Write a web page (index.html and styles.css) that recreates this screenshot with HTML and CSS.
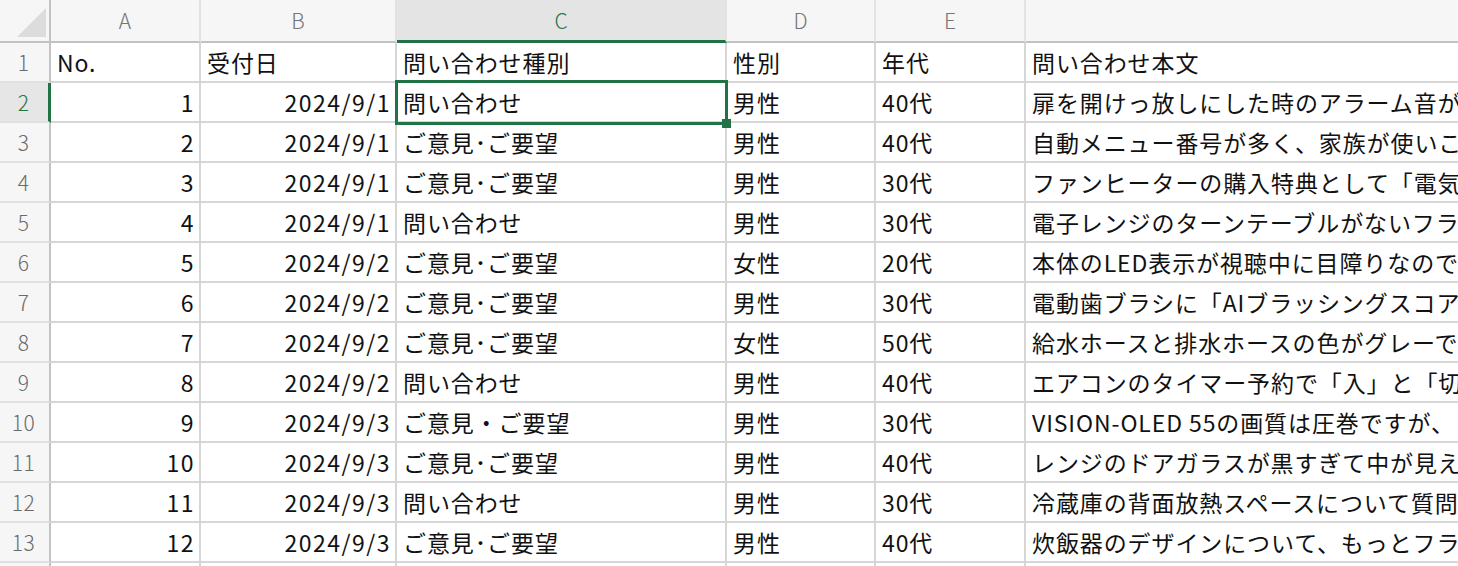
FILE: index.html
```html
<!DOCTYPE html>
<html lang="ja">
<head>
<meta charset="utf-8">
<title>Sheet</title>
<link rel="stylesheet" href="styles.css">
</head>
<body>
<div class="sheet">
  <div class="corner">
    <svg width="50" height="43" viewBox="0 0 50 43"><polygon points="17,37 46,37 46,8" fill="#dcdcdc"/></svg>
  </div>
  <div class="colhead">A</div>
  <div class="colhead">B</div>
  <div class="colhead sel">C</div>
  <div class="colhead">D</div>
  <div class="colhead">E</div>
  <div class="colhead last"></div>

  <div class="rowhead">1</div>
  <div class="cell">No.</div>
  <div class="cell">受付日</div>
  <div class="cell">問い合わせ種別</div>
  <div class="cell">性別</div>
  <div class="cell">年代</div>
  <div class="cell">問い合わせ本文</div>

  <div class="rowhead sel">2</div>
  <div class="cell num">1</div>
  <div class="cell num">2024/9/1</div>
  <div class="cell active">問い合わせ<span class="selbox"><span class="handle"></span></span></div>
  <div class="cell">男性</div>
  <div class="cell">40代</div>
  <div class="cell">扉を開けっ放しにした時のアラーム音が</div>

  <div class="rowhead">3</div>
  <div class="cell num">2</div>
  <div class="cell num">2024/9/1</div>
  <div class="cell">ご意見･ご要望</div>
  <div class="cell">男性</div>
  <div class="cell">40代</div>
  <div class="cell">自動メニュー番号が多く、家族が使いこ</div>

  <div class="rowhead">4</div>
  <div class="cell num">3</div>
  <div class="cell num">2024/9/1</div>
  <div class="cell">ご意見･ご要望</div>
  <div class="cell">男性</div>
  <div class="cell">30代</div>
  <div class="cell">ファンヒーターの購入特典として「電気</div>

  <div class="rowhead">5</div>
  <div class="cell num">4</div>
  <div class="cell num">2024/9/1</div>
  <div class="cell">問い合わせ</div>
  <div class="cell">男性</div>
  <div class="cell">30代</div>
  <div class="cell">電子レンジのターンテーブルがないフラ</div>

  <div class="rowhead">6</div>
  <div class="cell num">5</div>
  <div class="cell num">2024/9/2</div>
  <div class="cell">ご意見･ご要望</div>
  <div class="cell">女性</div>
  <div class="cell">20代</div>
  <div class="cell">本体のLED表示が視聴中に目障りなので</div>

  <div class="rowhead">7</div>
  <div class="cell num">6</div>
  <div class="cell num">2024/9/2</div>
  <div class="cell">ご意見･ご要望</div>
  <div class="cell">男性</div>
  <div class="cell">30代</div>
  <div class="cell">電動歯ブラシに「AIブラッシングスコア</div>

  <div class="rowhead">8</div>
  <div class="cell num">7</div>
  <div class="cell num">2024/9/2</div>
  <div class="cell">ご意見･ご要望</div>
  <div class="cell">女性</div>
  <div class="cell">50代</div>
  <div class="cell">給水ホースと排水ホースの色がグレーで</div>

  <div class="rowhead">9</div>
  <div class="cell num">8</div>
  <div class="cell num">2024/9/2</div>
  <div class="cell">問い合わせ</div>
  <div class="cell">男性</div>
  <div class="cell">40代</div>
  <div class="cell">エアコンのタイマー予約で「入」と「切</div>

  <div class="rowhead">10</div>
  <div class="cell num">9</div>
  <div class="cell num">2024/9/3</div>
  <div class="cell">ご意見・ご要望</div>
  <div class="cell">男性</div>
  <div class="cell">30代</div>
  <div class="cell">VISION-OLED 55の画質は圧巻ですが、</div>

  <div class="rowhead">11</div>
  <div class="cell num">10</div>
  <div class="cell num">2024/9/3</div>
  <div class="cell">ご意見･ご要望</div>
  <div class="cell">男性</div>
  <div class="cell">40代</div>
  <div class="cell">レンジのドアガラスが黒すぎて中が見え</div>

  <div class="rowhead">12</div>
  <div class="cell num">11</div>
  <div class="cell num">2024/9/3</div>
  <div class="cell">問い合わせ</div>
  <div class="cell">男性</div>
  <div class="cell">30代</div>
  <div class="cell">冷蔵庫の背面放熱スペースについて質問</div>

  <div class="rowhead">13</div>
  <div class="cell num">12</div>
  <div class="cell num">2024/9/3</div>
  <div class="cell">ご意見･ご要望</div>
  <div class="cell">男性</div>
  <div class="cell">40代</div>
  <div class="cell">炊飯器のデザインについて、もっとフラ</div>

  <div class="rowhead"></div>
  <div class="cell"></div>
  <div class="cell"></div>
  <div class="cell"></div>
  <div class="cell"></div>
  <div class="cell"></div>
  <div class="cell"></div>
</div>
</body>
</html>
```
FILE: styles.css
```css
html, body {
  margin: 0;
  padding: 0;
  background: #ffffff;
  overflow: hidden;
}

.sheet {
  display: grid;
  grid-template-columns: 51px 150px 196px 330px 149px 150px 700px;
  grid-template-rows: 43px repeat(14, 40px);
  width: 1726px;
  font-family: "Noto Sans CJK JP", "Noto Sans", sans-serif;
}

.corner {
  background: #f6f6f6;
  border-right: 2px solid #c2c2c2;
  border-bottom: 2px solid #c2c2c2;
  box-sizing: border-box;
  overflow: hidden;
}
.corner svg { display: block; }

.colhead {
  box-sizing: border-box;
  background: #f6f6f6;
  border-right: 2px solid #e2e2e2;
  border-bottom: 2px solid #c2c2c2;
  color: #757575;
  font-size: 21px;
  font-weight: 300;
  line-height: 41px;
  text-align: center;
}
.colhead.sel {
  background: #e4e4e4;
  color: #217346;
  border-bottom: 3px solid #217346;
  line-height: 40px;
}

.rowhead {
  box-sizing: border-box;
  background: #f6f6f6;
  border-right: 2px solid #c2c2c2;
  border-bottom: 2px solid #e0e0e0;
  color: #6a6a6a;
  font-size: 21px;
  font-weight: 300;
  line-height: 38px;
  text-align: center;
  padding-right: 2px;
  letter-spacing: 0.5px;
}
.rowhead.sel {
  background: #e6e6e6;
  color: #217346;
  border-right: 3px solid #217346;
  padding-right: 1px;
}

.cell {
  box-sizing: border-box;
  border-right: 2px solid #d6d6d6;
  border-bottom: 2px solid #d6d6d6;
  color: #111111;
  font-size: 23px;
  letter-spacing: 0.9px;
  line-height: 38px;
  padding: 0 5px 0 6px;
  white-space: nowrap;
  overflow: visible;
  position: relative;
}
.cell.num {
  text-align: right;
  letter-spacing: 1.5px;
  padding-right: 4px;
}

.selbox {
  position: absolute;
  left: -2px;
  top: -3px;
  right: -3px;
  bottom: -4px;
  border: 3px solid #217346;
  z-index: 2;
}
.handle {
  position: absolute;
  right: -6px;
  bottom: -6px;
  width: 9px;
  height: 9px;
  background: #217346;
}
```
